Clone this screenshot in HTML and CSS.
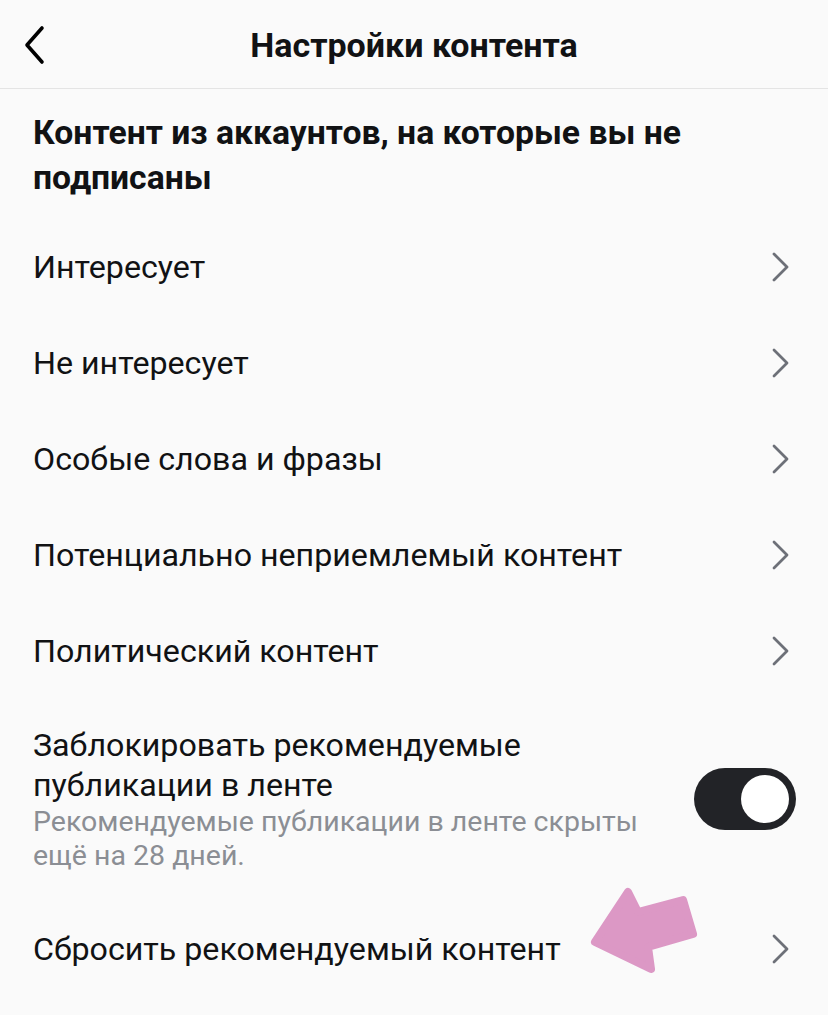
FILE: index.html
```
<!DOCTYPE html>
<html lang="ru">
  <head>
    <meta charset="utf-8" />
    <meta name="viewport" content="width=device-width, initial-scale=1" />
    <title>Настройки контента</title>
    <link rel="stylesheet" href="styles.css">
  </head>
  <body>
    <div class="topbar">
      <button type="button" class="back-button">
        <svg width="26" height="40" viewBox="0 0 26 40">
          <path d="M20 3 L5 20 L20 37" fill="none" stroke="#000" stroke-width="3.6" stroke-linecap="round" stroke-linejoin="round" />
        </svg>
      </button>
      <h1 class="title">Настройки контента</h1>
    </div>

    <div class="content">
      <h2 class="section-title">Контент из аккаунтов, на которые вы не подписаны</h2>

      <div class="row">
        <span class="row-label">Интересует</span>
        <svg class="chevron" width="20" height="30" viewBox="0 0 20 30"><path d="M4 2 L17 15 L4 28" /></svg>
      </div>
      <div class="row">
        <span class="row-label">Не интересует</span>
        <svg class="chevron" width="20" height="30" viewBox="0 0 20 30"><path d="M4 2 L17 15 L4 28" /></svg>
      </div>
      <div class="row">
        <span class="row-label">Особые слова и фразы</span>
        <svg class="chevron" width="20" height="30" viewBox="0 0 20 30"><path d="M4 2 L17 15 L4 28" /></svg>
      </div>
      <div class="row">
        <span class="row-label">Потенциально неприемлемый контент</span>
        <svg class="chevron" width="20" height="30" viewBox="0 0 20 30"><path d="M4 2 L17 15 L4 28" /></svg>
      </div>
      <div class="row">
        <span class="row-label">Политический контент</span>
        <svg class="chevron" width="20" height="30" viewBox="0 0 20 30"><path d="M4 2 L17 15 L4 28" /></svg>
      </div>

      <div class="toggle-row">
        <div class="toggle-text">
          <div class="row-label">Заблокировать рекомендуемые публикации в ленте</div>
          <div class="row-note">Рекомендуемые публикации в ленте скрыты ещё на 28 дней.</div>
        </div>
        <div class="toggle on"><div class="knob"></div></div>
      </div>

      <div class="row last">
        <span class="row-label">Сбросить рекомендуемый контент</span>
        <svg class="chevron" width="20" height="30" viewBox="0 0 20 30"><path d="M4 2 L17 15 L4 28" /></svg>
        <svg class="pointer" width="110" height="90" viewBox="0 0 110 90">
          <polygon points="7,55 40,5 50,25 95,13 105,47 60,60 63,82" fill="#dc98c5" stroke="#dc98c5" stroke-width="8" stroke-linejoin="round" />
        </svg>
      </div>
    </div>
  </body>
</html>
```

FILE: styles.css
```
body {
  margin: 0;
  background-color: #fafafa;
  font-family: Roboto, "Noto Sans", sans-serif;
  color: #111214;
}

.topbar {
  position: relative;
  height: 88px;
  border-bottom: 1px solid #e4e4e4;
  display: flex;
  align-items: center;
  justify-content: center;
}

.back-button {
  position: absolute;
  left: 22px;
  top: 25px;
  padding: 0;
  border: none;
  background: none;
  cursor: pointer;
}

.title {
  margin: 0;
  font-size: 34px;
  font-weight: 700;
  margin-top: 2px;
}

.content {
  padding: 0 32px 0 33px;
}

.section-title {
  margin: 0;
  padding: 21px 0 19px;
  font-size: 33.7px;
  font-weight: 700;
  line-height: 45px;
}

.row {
  position: relative;
  height: 96px;
  display: flex;
  align-items: center;
  justify-content: space-between;
}

.row-label {
  font-size: 32.2px;
  line-height: 40px;
}

.chevron {
  margin-right: 6px;
}

.chevron path {
  fill: none;
  stroke: #6d7078;
  stroke-width: 2.8;
  stroke-linecap: round;
  stroke-linejoin: round;
}

.toggle-row {
  display: flex;
  align-items: center;
  padding: 26px 0 28px;
}

.toggle-text {
  flex: 1;
  margin-right: 20px;
}

.row-note {
  font-size: 28.5px;
  line-height: 34px;
  color: #8b8e94;
}

.toggle {
  width: 102px;
  height: 62px;
  border-radius: 31px;
  background-color: #222327;
  display: flex;
  align-items: center;
  justify-content: flex-end;
  padding: 0 7px;
  box-sizing: border-box;
}

.knob {
  width: 48px;
  height: 48px;
  border-radius: 50%;
  background-color: #fff;
}

.pointer {
  position: absolute;
  left: 555px;
  top: -14px;
}
```
